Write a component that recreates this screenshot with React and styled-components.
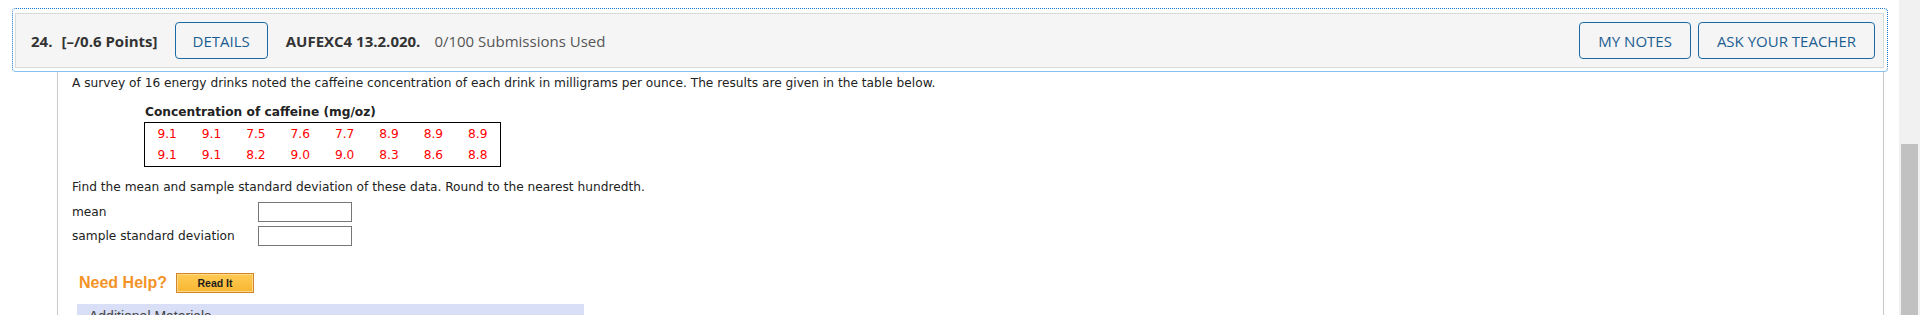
import React from "react";
import styled, { createGlobalStyle } from "styled-components";

const Global = createGlobalStyle`
  html, body { margin: 0; padding: 0; background: #fff; overflow: hidden; }
  body { width: 1920px; height: 315px; }
`;

const Page = styled.div`
  display: flex;
  height: 315px;
  overflow: hidden;
`;

const Main = styled.div`
  flex: 1;
  min-width: 0;
  padding: 8px 11px 0 12px;
`;

const Scrollbar = styled.div`
  width: 21px;
  background: #f1f1f1;
  display: flex;
  flex-direction: column;
  padding: 144px 2px 0 2px;
  box-sizing: border-box;
`;

const Thumb = styled.div`
  flex: 1;
  background: #c1c1c1;
`;

const Ring = styled.div`
  border: 1px dotted #1b74c9;
  border-bottom: 1px solid #86c3f0;
  border-radius: 4px;
  padding: 4px 3px 3px 2px;
`;

const Header = styled.div`
  display: flex;
  align-items: center;
  height: 55px;
  box-sizing: border-box;
  background: #f5f5f5;
  border: 1px solid #dadada;
  padding: 0 8px 0 15px;
  font-family: "Open Sans", "Liberation Sans", sans-serif;
  font-size: 15px;
  color: #333;
`;

const Strong = styled.span`
  font-weight: 700;
  color: #333;
  margin-right: ${(p) => p.$gap || 0}px;
`;

const Muted = styled.span`
  color: #555;
`;

const OutlineButton = styled.button`
  height: 37px;
  padding: 0 ${(p) => p.$pad || 18}px;
  margin-right: ${(p) => p.$gap || 0}px;
  background: transparent;
  border: 1px solid #1a6aa6;
  border-radius: 4px;
  color: #1c5d92;
  font-family: "Open Sans", "Liberation Sans", sans-serif;
  font-size: 15px;
  font-weight: 400;
  cursor: pointer;
`;

const RightGroup = styled.div`
  margin-left: auto;
  display: flex;
  gap: 7px;
`;

const Content = styled.div`
  margin: 0 4px 0 45px;
  height: 260px;
  border-left: 1px solid #c9c9c9;
  border-right: 1px solid #c9c9c9;
  padding: 3px 0 0 14px;
  font-family: "DejaVu Sans", Verdana, sans-serif;
  font-size: 12.2px;
  color: #222;
`;

const Line = styled.p`
  margin: ${(p) => p.$top || 0}px 0 0 0;
  line-height: 16px;
`;

const DataBlock = styled.div`
  margin: 13px 0 0 72px;
`;

const DataTitle = styled.div`
  font-weight: 700;
  line-height: 16px;
  padding-left: 1px;
`;

const DataTable = styled.div`
  margin-top: 2px;
  width: 357px;
  box-sizing: border-box;
  border: 1px solid #000;
  display: grid;
  grid-template-columns: repeat(8, 1fr);
  grid-auto-rows: 21.5px;
`;

const Cell = styled.div`
  display: flex;
  align-items: center;
  justify-content: center;
  color: #ff0000;
  font-size: 12.2px;
`;

const Form = styled.div`
  margin-top: 7px;
  display: grid;
  grid-template-columns: 186px 94px;
  row-gap: 4.5px;
  align-items: center;
`;

const Label = styled.div`
  line-height: 16px;
`;

const Input = styled.input`
  width: 94px;
  height: 19.5px;
  box-sizing: border-box;
  border: 1px solid #767676;
  padding: 0 3px;
  margin: 0;
  background: #fff;
`;

const HelpRow = styled.div`
  display: flex;
  align-items: center;
  margin: 27px 0 0 7px;
`;

const NeedHelp = styled.span`
  font-family: "Liberation Sans", Arial, sans-serif;
  font-weight: 700;
  font-size: 16px;
  color: #f39327;
  margin-right: 9px;
`;

const ReadIt = styled.button`
  width: 78px;
  height: 20px;
  padding: 0;
  border: 1px solid #d3852a;
  box-shadow: inset 0 0 0 1px #ffd98a;
  background: linear-gradient(#ffcb55, #f8b631);
  font-family: "Liberation Sans", Arial, sans-serif;
  font-weight: 700;
  font-size: 10.5px;
  color: #1d1d1d;
  cursor: pointer;
`;

const Materials = styled.div`
  margin: 11px 0 0 5px;
  width: 507px;
  background: #d8dff6;
  padding: 4px 12px;
  box-sizing: border-box;
  font-family: "Liberation Sans", Arial, sans-serif;
  font-size: 14px;
  line-height: 16px;
  color: #444;
`;

const row1 = ["9.1", "9.1", "7.5", "7.6", "7.7", "8.9", "8.9", "8.9"];
const row2 = ["9.1", "9.1", "8.2", "9.0", "9.0", "8.3", "8.6", "8.8"];

export default function App() {
  return (
    <>
      <Global />
      <Page>
        <Main>
          <Ring>
            <Header>
              <Strong $gap={9}>24.</Strong>
              <Strong $gap={17}>[–/0.6 Points]</Strong>
              <OutlineButton $pad={17} $gap={18}>DETAILS</OutlineButton>
              <Strong $gap={14}>AUFEXC4 13.2.020.</Strong>
              <Muted>0/100 Submissions Used</Muted>
              <RightGroup>
                <OutlineButton>MY NOTES</OutlineButton>
                <OutlineButton>ASK YOUR TEACHER</OutlineButton>
              </RightGroup>
            </Header>
          </Ring>
          <Content>
            <Line>
              A survey of 16 energy drinks noted the caffeine concentration of each drink in milligrams per ounce. The results are given in the table below.
            </Line>
            <DataBlock>
              <DataTitle>Concentration of caffeine (mg/oz)</DataTitle>
              <DataTable>
                {row1.map((v, i) => (
                  <Cell key={"a" + i}>{v}</Cell>
                ))}
                {row2.map((v, i) => (
                  <Cell key={"b" + i}>{v}</Cell>
                ))}
              </DataTable>
            </DataBlock>
            <Line $top={12}>
              Find the mean and sample standard deviation of these data. Round to the nearest hundredth.
            </Line>
            <Form>
              <Label>mean</Label>
              <Input type="text" />
              <Label>sample standard deviation</Label>
              <Input type="text" />
            </Form>
            <HelpRow>
              <NeedHelp>Need Help?</NeedHelp>
              <ReadIt>Read It</ReadIt>
            </HelpRow>
            <Materials>Additional Materials</Materials>
          </Content>
        </Main>
        <Scrollbar>
          <Thumb />
        </Scrollbar>
      </Page>
    </>
  );
}
